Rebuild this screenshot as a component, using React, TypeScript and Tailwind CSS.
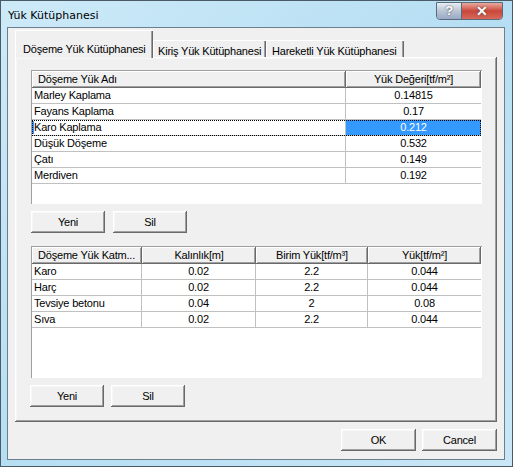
import React from "react"

const raised =
  "shadow-[inset_-1px_-1px_#696969,inset_1px_1px_#ffffff,inset_-2px_-2px_#a0a0a0,inset_2px_2px_#f7f7f7]"

function Btn({ label, w = "w-[74px]" }: { label: string; w?: string }) {
  return (
    <div className={`${w} h-[22px] flex items-center justify-center bg-[#f0f0f0] ${raised}`}>
      {label}
    </div>
  )
}

function HeaderCell({ children, w, left = false }: { children: React.ReactNode; w: string; left?: boolean }) {
  return (
    <div
      className={`${w} h-[17px] shrink-0 flex items-center bg-[#f0f0f0] truncate ${
        left ? "pl-[6px]" : "justify-center"
      } shadow-[inset_-1px_-1px_#696969,inset_1px_1px_#ffffff,inset_-2px_-2px_#a0a0a0]`}
    >
      {children}
    </div>
  )
}

const loads = [
  ["Marley Kaplama", "0.14815"],
  ["Fayans Kaplama", "0.17"],
  ["Karo Kaplama", "0.212"],
  ["Düşük Döşeme", "0.532"],
  ["Çatı", "0.149"],
  ["Merdiven", "0.192"],
]

const layers = [
  ["Karo", "0.02", "2.2", "0.044"],
  ["Harç", "0.02", "2.2", "0.044"],
  ["Tevsiye betonu", "0.04", "2", "0.08"],
  ["Sıva", "0.02", "2.2", "0.044"],
]

function LoadTable() {
  return (
    <div className="w-[451px] h-[134px] bg-white shadow-[inset_1px_1px_#a0a0a0,inset_-1px_-1px_#ffffff] p-[1px] flex flex-col">
      <div className="flex">
        <HeaderCell w="w-[314px]" left>
          Döşeme Yük Adı
        </HeaderCell>
        <HeaderCell w="w-[135px]">Yük Değeri[tf/m²]</HeaderCell>
      </div>
      {loads.map(([name, val], i) => {
        const sel = i === 2
        return (
          <div key={name} className="flex h-[16px] relative">
            <div className="w-[314px] shrink-0 border-b border-r border-[#c0c0c0] pl-[2px] leading-[15px] relative">
              {sel && <span className="absolute left-0 top-[1px] w-[2px] h-[13px] bg-[#3399ff]" />}
              {name}
            </div>
            <div
              className={`w-[135px] shrink-0 border-b border-[#c0c0c0] text-center leading-[15px] ${
                sel ? "bg-[#3399ff] text-white" : ""
              }`}
            >
              {val}
            </div>
            {sel && <div className="absolute inset-0 border border-dotted border-black pointer-events-none" />}
          </div>
        )
      })}
    </div>
  )
}

function LayerTable() {
  const widths = ["w-[110px]", "w-[114px]", "w-[112px]", "w-[113px]"]
  return (
    <div className="w-[451px] h-[132px] bg-white shadow-[inset_1px_1px_#a0a0a0,inset_-1px_-1px_#ffffff] p-[1px] flex flex-col">
      <div className="flex">
        <HeaderCell w={widths[0]} left>
          Döşeme Yük Katm...
        </HeaderCell>
        <HeaderCell w={widths[1]}>Kalınlık[m]</HeaderCell>
        <HeaderCell w={widths[2]}>Birim Yük[tf/m³]</HeaderCell>
        <HeaderCell w={widths[3]}>Yük[tf/m²]</HeaderCell>
      </div>
      {layers.map((row) => (
        <div key={row[0]} className="flex h-[16px]">
          {row.map((c, j) => (
            <div
              key={j}
              className={`${widths[j]} shrink-0 border-b border-[#c0c0c0] leading-[15px] ${
                j === 0 ? "pl-[2px]" : "text-center"
              } ${j < 3 ? "border-r" : ""}`}
            >
              {c}
            </div>
          ))}
        </div>
      ))}
    </div>
  )
}

export default function App() {
  return (
    <div
      className="w-[513px] h-[467px] flex flex-col bg-gradient-to-br from-[#cdeaf8] via-[#b6def3] to-[#c9e7f6] text-[11px] tracking-[-0.2px] text-black shadow-[inset_1px_1px_#4a5a66,inset_-1px_-1px_#4a5a66]"
      style={{ fontFamily: '"Liberation Sans", Arial, sans-serif' }}
    >
      {/* title bar */}
      <div className="h-[28px] flex items-start shrink-0">
        <div
          className="pl-[8px] pt-[8px] text-[11px] tracking-normal text-black"
          style={{ fontFamily: '"DejaVu Sans", "Liberation Sans", sans-serif' }}
        >
          Yük Kütüphanesi
        </div>
        <div className="ml-auto mr-[10px] mt-[2px] flex h-[18px] rounded-b-[4px] border border-[#5a6c7a] overflow-hidden">
          <div className="w-[25px] h-full flex items-center justify-center bg-gradient-to-b from-[#e8eef4] via-[#b9c6d4] to-[#9aa8c8] border-r border-[#5a6c7a] text-white font-bold text-[13px] [text-shadow:0_0_2px_#333]">
            ?
          </div>
          <div className="w-[40px] h-full flex items-center justify-center bg-gradient-to-b from-[#e9a9a0] via-[#c9463a] to-[#d8685a] text-white font-bold text-[14px] [text-shadow:0_0_2px_#333]">
            ✕
          </div>
        </div>
      </div>

      {/* client area */}
      <div className="ml-[8px] mr-[9px] h-[431px] bg-[#f0f0f0] shadow-[0_0_0_1px_#6b7f8c] flex flex-col pl-[7px] pt-[2px]">
        {/* tabs */}
        <div className="flex items-end h-[27px] relative z-10">
          <div className="w-[138px] h-[28px] -mb-[1px] bg-[#f0f0f0] pl-[8px] pt-[11px] shadow-[inset_1px_1px_#ffffff,inset_-1px_0_#696969,inset_-2px_0_#a0a0a0]">
            Döşeme Yük Kütüphanesi
          </div>
          <div className="w-[113px] h-[17px] pl-[5px] pt-[3px] shadow-[inset_1px_1px_#ffffff,inset_-1px_0_#696969,inset_-2px_0_#a0a0a0]">
            Kiriş Yük Kütüphanesi
          </div>
          <div className="w-[138px] h-[17px] pl-[6px] pt-[3px] shadow-[inset_1px_1px_#ffffff,inset_-1px_0_#696969,inset_-2px_0_#a0a0a0]">
            Hareketli Yük Kütüphanesi
          </div>
        </div>

        {/* tab panel */}
        <div className={`w-[482px] h-[365px] bg-[#f0f0f0] ${raised} pl-[16px] pt-[13px] flex flex-col`}>
          <LoadTable />
          <div className="flex gap-[8px] mt-[7px]">
            <Btn label="Yeni" />
            <Btn label="Sil" />
          </div>
          <div className="mt-[13px]">
            <LayerTable />
          </div>
          <div className="flex gap-[7px] mt-[7px] -ml-[1px]">
            <Btn label="Yeni" />
            <Btn label="Sil" />
          </div>
        </div>

        {/* dialog buttons */}
        <div className="flex justify-end gap-[6px] mt-[7px] w-[482px]">
          <Btn label="OK" w="w-[75px]" />
          <Btn label="Cancel" w="w-[75px]" />
        </div>
      </div>
    </div>
  )
}
